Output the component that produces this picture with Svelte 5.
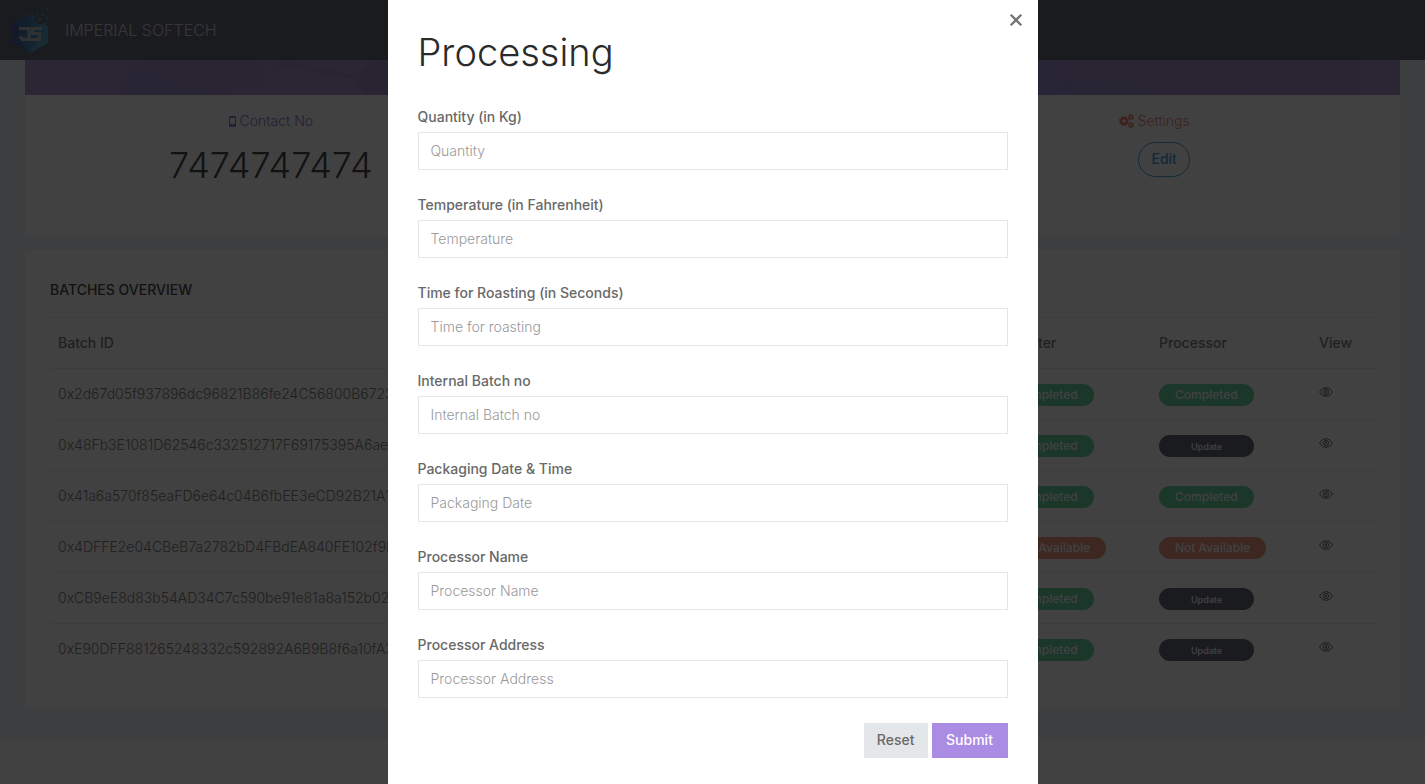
<script>
  const fields = [
    { id: 'quantity', label: 'Quantity (in Kg)', placeholder: 'Quantity' },
    { id: 'temperature', label: 'Temperature (in Fahrenheit)', placeholder: 'Temperature' },
    { id: 'roasting', label: 'Time for Roasting (in Seconds)', placeholder: 'Time for roasting' },
    { id: 'batch', label: 'Internal Batch no', placeholder: 'Internal Batch no' },
    { id: 'packaging', label: 'Packaging Date & Time', placeholder: 'Packaging Date' },
    { id: 'name', label: 'Processor Name', placeholder: 'Processor Name' },
    { id: 'address', label: 'Processor Address', placeholder: 'Processor Address' }
  ];

  const batches = [
    { id: '0x2d67d05f937896dc96821B86fe24C56800B6723', importer: 'done', processor: 'done' },
    { id: '0x48Fb3E1081D62546c332512717F69175395A6aeA', importer: 'done', processor: 'update' },
    { id: '0x41a6a570f85eaFD6e64c04B6fbEE3eCD92B21A1', importer: 'done', processor: 'done' },
    { id: '0x4DFFE2e04CBeB7a2782bD4FBdEA840FE102f9B9', importer: 'none', processor: 'none' },
    { id: '0xCB9eE8d83b54AD34C7c590be91e81a8a152b02', importer: 'done', processor: 'update' },
    { id: '0xE90DFF881265248332c592892A6B9B8f6a10fA39', importer: 'done', processor: 'update' }
  ];
</script>

{#snippet status(kind)}
  {#if kind === 'done'}
    <span class="badge done">Completed</span>
  {:else if kind === 'none'}
    <span class="badge none">Not Available</span>
  {:else}
    <button class="badge update" type="button">Update</button>
  {/if}
{/snippet}

{#snippet gear(cx, cy, r)}
  <g transform="translate({cx} {cy})" fill="none" stroke="currentColor">
    <circle r={r * 0.6} stroke-width={r * 0.5} />
    <circle r={r * 0.88} stroke-width={r * 0.3} stroke-dasharray="{r * 0.346} {r * 0.346}" />
  </g>
{/snippet}

<div class="page">
  <header>
    <svg class="logo" viewBox="0 0 36 48" aria-hidden="true">
      <defs>
        <linearGradient id="hex" x1="0" y1="0" x2="1" y2="0.2">
          <stop offset="0" stop-color="#2b3a9c" />
          <stop offset="0.55" stop-color="#2578bd" />
          <stop offset="1" stop-color="#36b6dc" />
        </linearGradient>
      </defs>
      <path d="M0 17 18 7V12L23 14 27 18 32 18 36 20V37L18 47 0 37Z" fill="url(#hex)" />
      <path d="M0 17 9 24 0 37ZM18 47 9 36 0 37Z" fill="#26308a" opacity="0.5" />
      <path d="M36 37 25 36 18 47Z" fill="#59cbe6" opacity="0.5" />
      <g fill="#2f8fc4">
        <path d="M19 8 24 11 19 14ZM25 5 28 8 24 9ZM30 6 33 9 29 10ZM26 11 31 13 27 16ZM32 11 36 10V15ZM31 16 35 17 32 20ZM29 2H31V4H29ZM34 2H36V4H34Z" />
      </g>
      <g fill="none" stroke="#d5d9e0" stroke-width="3">
        <path d="M7 22.500H17V33.500H11L8 30.500" />
        <path d="M30 22.500H20.500V27.500H27.500V33.500H17" />
      </g>
    </svg>
    <span class="brand">IMPERIAL SOFTECH</span>
  </header>

  <main>
    <section class="profile">
      <svg class="banner" viewBox="0 0 1375 35" preserveAspectRatio="none" aria-hidden="true">
        <defs>
          <linearGradient id="wash">
            <stop offset="0" stop-color="#a082bf" />
            <stop offset="0.6" stop-color="#8f80c8" />
            <stop offset="0.76" stop-color="#8b80c6" />
            <stop offset="1" stop-color="#a080bd" />
          </linearGradient>
        </defs>
        <rect width="1375" height="35" fill="url(#wash)" />
        <path d="M105 5 195 35H95Z" fill="#8783c4" opacity="0.7" />
        <path d="M260 0 330 15 350 0H363V35H340L330 19 250 5Z" fill="#8b74ae" opacity="0.4" />
        <path d="M1025 0H1245L1280 17 1240 32 1025 20Z" fill="#a080bd" opacity="0.5" />
      </svg>
      <div class="facts">
        <div class="fact contact">
          <p>
            <svg class="mobile" viewBox="0 0 7 11" aria-hidden="true">
              <path fill="currentColor" fill-rule="evenodd" d="M1 0H6Q7 0 7 1V10Q7 11 6 11H1Q0 11 0 10V1Q0 0 1 0ZM1 2V8H6V2ZM3 9V10H4V9Z" />
            </svg>
            Contact No
          </p>
          <h1>7474747474</h1>
        </div>
        <div class="fact"></div>
        <div class="fact settings">
          <p>
            <svg class="gears" viewBox="0 0 15 14" aria-hidden="true">
              {@render gear(5, 7, 5)}
              {@render gear(12, 3, 3)}
              {@render gear(12, 11, 3)}
            </svg>
            Settings
          </p>
          <button class="edit" type="button">Edit</button>
        </div>
      </div>
    </section>

    <section class="batches">
      <h3>BATCHES OVERVIEW</h3>
      <table>
        <colgroup>
          <col />
          <col class="stage" /><col class="stage" /><col class="stage" /><col class="stage" /><col class="stage" />
          <col class="view" />
        </colgroup>
        <thead>
          <tr>
            <th>Batch ID</th>
            <th></th>
            <th></th>
            <th></th>
            <th>Importer</th>
            <th>Processor</th>
            <th>View</th>
          </tr>
        </thead>
        <tbody>
          {#each batches as batch}
            <tr>
              <td>{batch.id}</td>
              <td></td>
              <td></td>
              <td></td>
              <td class="state">{@render status(batch.importer)}</td>
              <td class="state">{@render status(batch.processor)}</td>
              <td>
                <a class="eye" href="#view" aria-label="View batch">
                  <svg viewBox="0 0 14 10" fill="none" stroke="currentColor" aria-hidden="true">
                    <path d="M0.5 5Q3 0.6 7 0.6T13.5 5Q11 9.4 7 9.4T0.5 5Z" />
                    <circle cx="7" cy="5" r="2.6" />
                    <circle cx="7" cy="5" r="0.8" />
                  </svg>
                </a>
              </td>
            </tr>
          {/each}
        </tbody>
      </table>
    </section>
  </main>
</div>

<div class="overlay">
  <div class="modal" role="dialog" aria-modal="true" aria-labelledby="title">
    <button class="close" type="button" aria-label="Close">
      <svg viewBox="0 0 12 12" aria-hidden="true">
        <path d="M1.5 1.5 10.5 10.5M10.5 1.5 1.5 10.5" stroke="currentColor" stroke-width="2" />
      </svg>
    </button>
    <h2 id="title">Processing</h2>
    <form>
      {#each fields as field}
        <div class="field">
          <label for={field.id}>{field.label}</label>
          <input id={field.id} type="text" placeholder={field.placeholder} />
        </div>
      {/each}
      <div class="actions">
        <button class="reset" type="reset">Reset</button>
        <button class="submit" type="button">Submit</button>
      </div>
    </form>
  </div>
</div>

<style>
  :global(body) {
    margin: 0;
    background: #fff;
    font-family: Inter, "Open Sans", sans-serif;
    font-size: 14px;
    font-weight: 300;
    line-height: 20px;
    color: #686868;
    overflow: hidden;
  }
  * {
    box-sizing: border-box;
  }
  button,
  input {
    font: inherit;
    margin: 0;
  }
  h1,
  h2,
  h3,
  p {
    margin: 0;
  }
  svg {
    display: block;
  }

  header {
    display: flex;
    align-items: center;
    gap: 17px;
    height: 60px;
    padding: 0 12px;
    background: #4f5467;
  }
  .logo {
    width: 36px;
    height: 48px;
    opacity: 0.75;
  }
  .brand {
    font-size: 16px;
    color: #fff;
    opacity: 0.7;
  }

  main {
    display: flex;
    flex-direction: column;
    gap: 15px;
    padding: 0 25px 30px;
    background: #edf1f5;
  }
  .profile,
  .batches {
    background: #fff;
  }
  .banner {
    width: 100%;
    height: 35px;
  }
  .facts {
    display: grid;
    grid-template-columns: repeat(3, 1fr);
    min-height: 140px;
    padding: 16px 25px;
  }
  .fact {
    display: flex;
    flex-direction: column;
    align-items: center;
  }
  .fact p {
    display: flex;
    align-items: center;
    gap: 4px;
  }
  .contact p {
    color: #7868c8;
  }
  .settings p {
    color: #e8705a;
  }
  .mobile {
    width: 7px;
    height: 11px;
  }
  .gears {
    width: 15px;
    height: 14px;
  }
  h1,
  h2 {
    font-size: 36px;
    line-height: 48px;
    font-weight: 300;
    color: #2b2b2b;
  }
  h1 {
    margin-top: 10px;
  }
  h2 {
    font-size: 38px;
  }
  .edit {
    margin: 11px 0 0 20px;
    height: 35px;
    padding: 0 12px 2px;
    border: 1px solid #2590d4;
    border-radius: 18px;
    background: transparent;
    color: #2590d4;
    font-weight: 500;
  }

  .batches {
    padding: 30px 25px 34px;
  }
  h3 {
    margin-bottom: 17px;
    font-size: 14px;
    line-height: 20px;
    font-weight: 500;
    color: #2b2b2b;
  }
  table {
    width: 100%;
    table-layout: fixed;
    border-collapse: collapse;
  }
  .stage {
    width: 160px;
  }
  .view {
    width: 64px;
  }
  th,
  td {
    height: 51px;
    padding: 0 8px;
    border-top: 1px solid #e4e7ea;
    text-align: left;
    white-space: nowrap;
  }
  th {
    font-weight: 500;
  }
  .state {
    padding-top: 2px;
  }
  .badge {
    display: inline-flex;
    align-items: center;
    justify-content: center;
    height: 22px;
    padding: 0 16px;
    border: 0;
    border-radius: 11px;
    color: #fff;
    font-size: 12px;
    font-weight: 500;
    vertical-align: middle;
  }
  .done {
    background: #4fcf94;
  }
  .none {
    background: #f08a70;
  }
  .update {
    min-width: 95px;
    padding-top: 2px;
    background: #4f5467;
    font-size: 9px;
  }
  .eye {
    display: inline-block;
    padding-bottom: 2px;
    color: #4f5467;
  }
  .eye svg {
    width: 14px;
    height: 10px;
  }

  .overlay {
    position: fixed;
    inset: 0;
    display: flex;
    justify-content: center;
    background: rgba(11, 11, 11, 0.78);
    overflow: hidden;
  }
  .modal {
    position: relative;
    width: 100%;
    max-width: 650px;
    min-height: 100vh;
    padding: 28px 30px;
    background: #fff;
  }
  .close {
    position: absolute;
    top: 8px;
    right: 10px;
    display: grid;
    place-items: center;
    width: 24px;
    height: 24px;
    padding: 0;
    border: 0;
    background: transparent;
    color: #757575;
  }
  .close svg {
    width: 14px;
    height: 14px;
  }
  form {
    display: flex;
    flex-direction: column;
    gap: 25px;
    padding-top: 31px;
  }
  .field {
    display: flex;
    flex-direction: column;
    gap: 5px;
  }
  label {
    font-weight: 500;
  }
  input {
    width: 100%;
    height: 38px;
    padding: 0 12px 2px;
    border: 1px solid #e4e7ea;
    border-radius: 0;
    background: #fff;
    color: #565656;
  }
  input::placeholder {
    color: #999;
    opacity: 1;
  }
  .actions {
    display: flex;
    justify-content: flex-end;
    gap: 4px;
  }
  .actions button {
    height: 35px;
    padding: 0 13px 2px;
    border: 0;
    font-weight: 500;
  }
  .reset {
    background: #e4e7ea;
    color: #686868;
  }
  .actions .submit {
    min-width: 76px;
    background: #ab8ce4;
    color: #fff;
  }
</style>
